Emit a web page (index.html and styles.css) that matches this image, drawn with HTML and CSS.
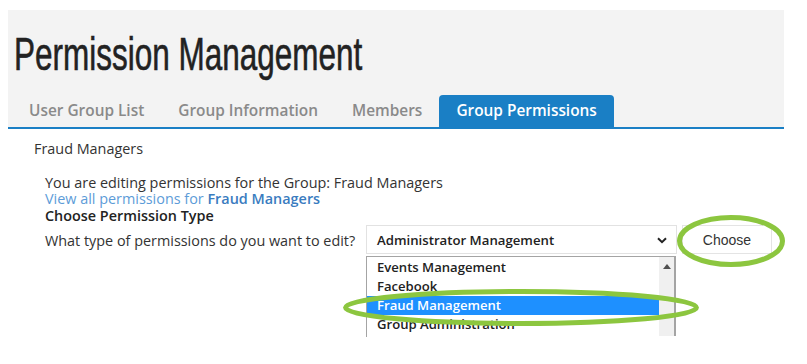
FILE: index.html
```html
<!DOCTYPE html>
<html lang="en">
<head>
  <meta charset="UTF-8">
  <meta name="viewport" content="width=device-width, initial-scale=1.0">
  <title>Permission Management</title>
  <link rel="stylesheet" href="styles.css">
</head>
<body>
  <div class="page">
    <header class="masthead">
      <h1 class="title"><span>Permission Management</span></h1>
      <nav class="tabs">
        <a class="tab" href="#">User Group List</a>
        <a class="tab" href="#">Group Information</a>
        <a class="tab" href="#">Members</a>
        <a class="tab active" href="#">Group Permissions</a>
      </nav>
    </header>

    <main class="content">
      <p class="group-name">Fraud Managers</p>
      <div class="intro">
        <p>You are editing permissions for the Group: Fraud Managers</p>
        <p><a class="view-link" href="#">View all permissions for <strong>Fraud Managers</strong></a></p>
        <h2 class="section-title">Choose Permission Type</h2>
      </div>

      <div class="type-row">
        <label class="type-label">What type of permissions do you want to edit?</label>
        <div class="select-wrap">
          <div class="select-box">
            <span>Administrator Management</span>
            <svg class="chevron" width="10" height="7" viewBox="0 0 10 7"><path d="M1 1.2 L5 5.2 L9 1.2" fill="none" stroke="#222" stroke-width="2"/></svg>
          </div>
          <ul class="listbox">
            <li>Events Management</li>
            <li>Facebook</li>
            <li class="selected">Fraud Management</li>
            <li>Group Administration</li>
            <li>Jobs</li>
          </ul>
          <div class="scrollbar">
            <svg width="8" height="5" viewBox="0 0 8 5"><path d="M0 5 L4 0 L8 5 Z" fill="#505050"/></svg>
          </div>
        </div>
        <button class="choose-btn">Choose</button>
      </div>
    </main>
  </div>

  <!-- highlight rings drawn over the screenshot -->
  <svg class="marks" width="807" height="364" viewBox="0 0 807 364">
    <ellipse cx="731" cy="241" rx="51.5" ry="23.5" fill="none" stroke="#8cc63f" stroke-width="5"/>
    <ellipse cx="521" cy="307.5" rx="175.5" ry="16" fill="none" stroke="#8cc63f" stroke-width="5"/>
  </svg>
</body>
</html>
```

FILE: styles.css
```css
body {
  margin: 0;
  font-family: "Open Sans", Arial, sans-serif;
  font-size: 14.4px;
  color: #333;
  background: #fff;
  height: 364px;
  overflow: hidden;
  position: relative;
}
.page {
  width: 776px;
  margin: 10px 0 0 8px;
}
.masthead {
  background: #f3f3f3;
  padding-top: 20px;
  border-bottom: 2px solid #1a7fc5;
}
.title {
  margin: 0 0 0 6px;
  height: 47px;
  font-family: "Liberation Sans", Arial, sans-serif;
  font-size: 47px;
  font-weight: normal;
  line-height: 47px;
  color: #222;
  white-space: nowrap;
}
.title span {
  display: inline-block;
  transform: scaleX(0.67);
  transform-origin: left center;
  -webkit-text-stroke: 0.6px #222;
}
.tabs {
  display: flex;
  margin-top: 18px;
  padding-left: 4px;
}
.tab {
  padding: 6px 17px;
  font-size: 15.4px;
  font-weight: 600;
  line-height: 20px;
  color: #8a8a8a;
  text-decoration: none;
  border-radius: 4px 4px 0 0;
}
.tab.active {
  background: #1a7fc5;
  color: #fff;
}
.content {
  padding: 10px 0 0 26px;
}
.content p {
  margin: 0;
}
.group-name {
  line-height: 19px;
}
.intro {
  margin-top: 16.5px;
  padding-left: 11px;
  line-height: 16.5px;
}
.view-link {
  color: #5d9cd8;
  text-decoration: none;
}
.view-link strong {
  color: #3a7cc0;
  font-weight: 600;
}
.section-title {
  margin: 0;
  font-size: 14.4px;
  font-weight: 600;
  color: #222;
}
.type-row {
  display: flex;
  align-items: center;
  margin-top: 1px;
  padding-left: 11px;
}
.type-label {
  width: 321px;
  padding-top: 2px;
  line-height: 19px;
  white-space: nowrap;
}
.select-wrap {
  position: relative;
}
.select-box {
  width: 290px;
  height: 27px;
  padding: 0 9px 0 10px;
  display: flex;
  align-items: center;
  justify-content: space-between;
  border: 1px solid #e2e2e2;
  font-size: 13.2px;
  font-weight: 600;
  color: #222;
  line-height: 19px;
}
.select-box span {
  padding-top: 2px;
}
.chevron {
  margin-top: 1px;
}
.listbox {
  position: absolute;
  left: 0;
  top: 31px;
  width: 292px;
  height: 79px;
  margin: 0;
  padding: 1px 0 0;
  list-style: none;
  border: 1px solid #a4a4a4;
  border-bottom: none;
  border-right: none;
  overflow: hidden;
  background: #fff;
  font-size: 13.1px;
  font-weight: 600;
  line-height: 19px;
  color: #222;
}
.listbox li {
  padding-left: 10px;
  height: 19px;
}
.listbox li.selected {
  background: #1e90ff;
  color: #fff;
}
.scrollbar {
  position: absolute;
  left: 293px;
  top: 31px;
  width: 17px;
  height: 80px;
  background: #f0f0f0;
  border-right: 2px solid #a4a4a4;
  border-top: 1px solid #a4a4a4;
  display: flex;
  justify-content: center;
  padding-top: 7px;
  box-sizing: border-box;
}
.choose-btn {
  margin-left: 5px;
  width: 90px;
  height: 29px;
  background: #fff;
  border: 1px solid #e4e4e4;
  font-family: "Liberation Sans", Arial, sans-serif;
  font-size: 14px;
  color: #333;
}
.marks {
  position: absolute;
  left: 0;
  top: 0;
  pointer-events: none;
}
```
